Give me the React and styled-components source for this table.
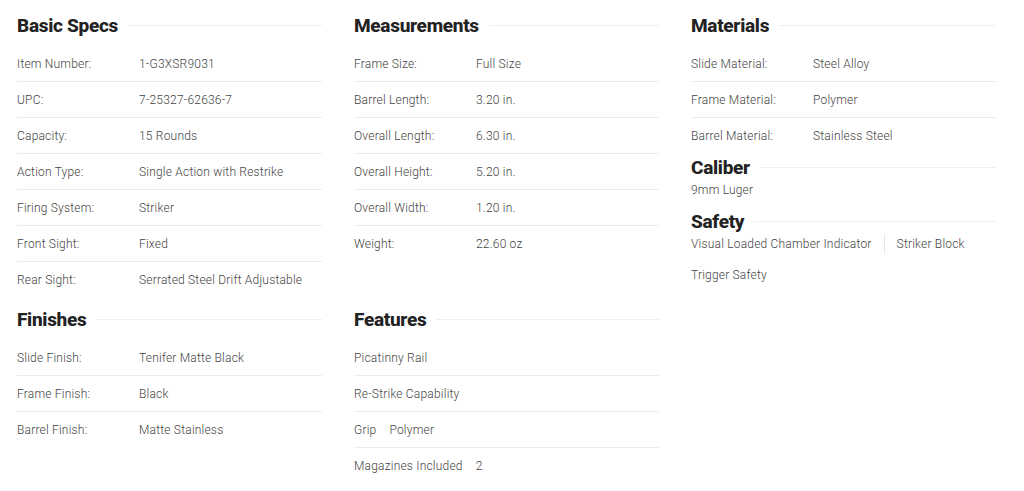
import React from "react";
import styled, { createGlobalStyle } from "styled-components";

const GlobalStyle = createGlobalStyle`
  html, body {
    margin: 0;
    padding: 0;
    background: #fff;
  }
  body {
    font-family: Roboto, "Liberation Sans", Arial, sans-serif;
  }
`;

const Page = styled.div`
  display: grid;
  grid-template-columns: repeat(3, 305px);
  column-gap: 32px;
  row-gap: 8px;
  align-items: start;
  padding: 12px 0 0 17px;
`;

const Section = styled.section`
  display: flex;
  flex-direction: column;
`;

const Heading = styled.h2`
  display: flex;
  align-items: center;
  gap: 10px;
  height: 26px;
  margin: ${(p) => (p.$top ? "8px" : "0")} 0 ${(p) => (p.$compact ? "0" : "8px")};
  font-size: 19px;
  font-weight: 800;
  color: #222;
  letter-spacing: -0.3px;
  white-space: nowrap;

  &::after {
    content: "";
    flex: 1;
    height: 1px;
    background: #efefef;
  }
`;

const List = styled.div`
  display: flex;
  flex-direction: column;
`;

const Row = styled.div`
  display: flex;
  align-items: center;
  gap: ${(p) => (p.$inline ? "13px" : "0")};
  height: 35px;
  border-bottom: 1px solid #ebebeb;
  font-size: 12px;
  font-weight: 300;
  letter-spacing: 0.2px;
  color: #444;

  &:last-child {
    border-bottom-color: transparent;
  }
`;

const Label = styled.span`
  flex: ${(p) => (p.$inline ? "none" : "0 0 122px")};
`;

const Value = styled.span``;

const Text = styled.div`
  height: 20px;
  line-height: 20px;
  font-size: 12px;
  font-weight: 300;
  letter-spacing: 0.2px;
  color: #444;
`;

const Tags = styled.div`
  display: flex;
  flex-wrap: wrap;
  row-gap: 11px;
`;

const Tag = styled.span`
  height: 20px;
  line-height: 20px;
  font-size: 12px;
  font-weight: 300;
  letter-spacing: 0.2px;
  color: #444;
  padding-right: 12px;
  margin-right: ${(p) => (p.$sep ? "12px" : "0")};
  border-right: ${(p) => (p.$sep ? "1px solid #e6e6e6" : "none")};
`;

const basic = [
  ["Item Number:", "1-G3XSR9031"],
  ["UPC:", "7-25327-62636-7"],
  ["Capacity:", "15 Rounds"],
  ["Action Type:", "Single Action with Restrike"],
  ["Firing System:", "Striker"],
  ["Front Sight:", "Fixed"],
  ["Rear Sight:", "Serrated Steel Drift Adjustable"],
];

const measurements = [
  ["Frame Size:", "Full Size"],
  ["Barrel Length:", "3.20 in."],
  ["Overall Length:", "6.30 in."],
  ["Overall Height:", "5.20 in."],
  ["Overall Width:", "1.20 in."],
  ["Weight:", "22.60 oz"],
];

const materials = [
  ["Slide Material:", "Steel Alloy"],
  ["Frame Material:", "Polymer"],
  ["Barrel Material:", "Stainless Steel"],
];

const finishes = [
  ["Slide Finish:", "Tenifer Matte Black"],
  ["Frame Finish:", "Black"],
  ["Barrel Finish:", "Matte Stainless"],
];

const features = [
  ["Picatinny Rail"],
  ["Re-Strike Capability"],
  ["Grip", "Polymer"],
  ["Magazines Included", "2"],
];

const SpecList = ({ rows }) => (
  <List>
    {rows.map(([label, value]) => (
      <Row key={label}>
        <Label>{label}</Label>
        <Value>{value}</Value>
      </Row>
    ))}
  </List>
);

export default function App() {
  return (
    <>
      <GlobalStyle />
      <Page>
        <Section>
          <Heading>Basic Specs</Heading>
          <SpecList rows={basic} />
        </Section>

        <Section>
          <Heading>Measurements</Heading>
          <SpecList rows={measurements} />
        </Section>

        <Section>
          <Heading>Materials</Heading>
          <SpecList rows={materials} />
          <Heading $compact>Caliber</Heading>
          <Text>9mm Luger</Text>
          <Heading $compact $top>Safety</Heading>
          <Tags>
            <Tag $sep>Visual Loaded Chamber Indicator</Tag>
            <Tag>Striker Block</Tag>
            <Tag>Trigger Safety</Tag>
          </Tags>
        </Section>

        <Section>
          <Heading>Finishes</Heading>
          <SpecList rows={finishes} />
        </Section>

        <Section>
          <Heading>Features</Heading>
          <List>
            {features.map(([label, value]) => (
              <Row key={label} $inline>
                <Label $inline>{label}</Label>
                {value && <Value>{value}</Value>}
              </Row>
            ))}
          </List>
        </Section>
      </Page>
    </>
  );
}
